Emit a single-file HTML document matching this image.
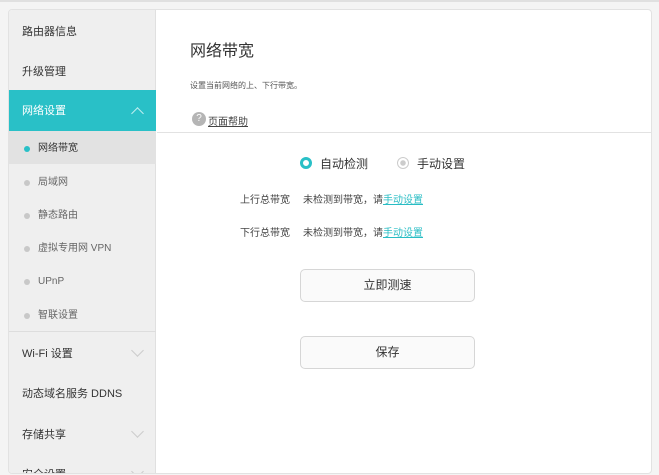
<!DOCTYPE html>
<html><head><meta charset="utf-8"><style>
*{margin:0;padding:0;box-sizing:border-box}
html,body{width:659px;height:475px;overflow:hidden}
body{background:#f4f4f4;font-family:"Liberation Sans","Noto Sans CJK SC",sans-serif;position:relative;color:#333}
.top{position:absolute;left:0;top:0;width:659px;height:2px;background:#e0e0e0}
.card{position:absolute;left:8px;top:9px;width:644px;height:465px;background:#fff;border:1px solid #e2e2e2;border-radius:4px;overflow:hidden}
.side{position:absolute;left:0;top:0;width:147px;height:480px;background:#efefef;border-right:1px solid #e0e0e0}
.it{position:absolute;left:13px;font-size:11px;color:#333;line-height:14px}
.act{position:absolute;left:0;top:80px;width:147px;height:41px;background:#29c0c7}
.sel{position:absolute;left:0;top:121px;width:147px;height:33px;background:#e2e2e2}
.sub{position:absolute;left:29px;font-size:10px;color:#666;line-height:12px}
.dot{position:absolute;left:15px;width:6px;height:6px;border-radius:50%;background:#c8c8c8}
.chev{position:absolute;left:124px;width:9px;height:9px;border-right:1px solid #ccc;border-bottom:1px solid #ccc;transform:rotate(45deg)}
.sep{position:absolute;left:0;top:321px;width:147px;height:1px;background:#ddd}
.main{position:absolute;left:148px;top:0;right:0}
.t{position:absolute;font-size:12px}
.btn{position:absolute;left:143px;width:175px;height:33px;border:1px solid #d6d6d6;border-radius:5px;background:#fafafa;font-size:12px;text-align:center;line-height:31px;color:#333}
a{color:#29bdc4;text-decoration:underline}
</style></head><body>
<div class="top"></div>
<div class="card">
 <div class="side">
  <div class="it" style="top:15px">路由器信息</div>
  <div class="it" style="top:55px">升级管理</div>
  <div class="act"></div>
  <div class="it" style="top:94px;color:#fff">网络设置</div>
  <div class="chev" style="top:99px;border-color:#bfeef0;transform:rotate(225deg)"></div>
  <div class="sel"></div>
  <div class="dot" style="top:136px;background:#29c0c7"></div><div class="sub" style="top:133px;color:#333">网络带宽</div>
  <div class="dot" style="top:170px"></div><div class="sub" style="top:167px">局域网</div>
  <div class="dot" style="top:203px"></div><div class="sub" style="top:200px">静态路由</div>
  <div class="dot" style="top:236px"></div><div class="sub" style="top:233px">虚拟专用网 VPN</div>
  <div class="dot" style="top:269px"></div><div class="sub" style="top:266px">UPnP</div>
  <div class="dot" style="top:303px"></div><div class="sub" style="top:300px">智联设置</div>
  <div class="sep"></div>
  <div class="it" style="top:337px">Wi-Fi 设置</div><div class="chev" style="top:336px"></div>
  <div class="it" style="top:377px">动态域名服务 DDNS</div>
  <div class="it" style="top:418px">存储共享</div><div class="chev" style="top:417px"></div>
  <div class="it" style="top:458px">安全设置</div><div class="chev" style="top:457px"></div>
 </div>
 <div class="main">
  <div class="t" style="left:33px;top:27px;font-size:16px;color:#333">网络带宽</div>
  <div class="t" style="left:33px;top:70px;font-size:8px;color:#555">设置当前网络的上、下行带宽。</div>
  <div style="position:absolute;left:35px;top:102px;width:14px;height:14px;border-radius:50%;background:#b5b5b5;color:#fff;font-size:10px;text-align:center;line-height:14px">?</div>
  <div class="t" style="left:51px;top:103px;font-size:10px;text-decoration:underline;color:#444">页面帮助</div>
  <div style="position:absolute;left:0;top:122px;width:500px;height:1px;background:#e2e2e2"></div>
  <div style="position:absolute;left:143px;top:147px;width:12px;height:12px;border-radius:50%;border:3.5px solid #29c0c7"></div>
  <div class="t" style="left:163px;top:145px">自动检测</div>
  <div style="position:absolute;left:240px;top:147px;width:12px;height:12px;border-radius:50%;border:1px solid #ccc;background:radial-gradient(#ccc 0 2.5px,#fff 3px)"></div>
  <div class="t" style="left:260px;top:145px">手动设置</div>
  <div class="t" style="left:83px;top:181px;font-size:10px;color:#444">上行总带宽</div>
  <div class="t" style="left:146px;top:181px;font-size:10px;color:#444">未检测到带宽，请<a>手动设置</a></div>
  <div class="t" style="left:83px;top:214px;font-size:10px;color:#444">下行总带宽</div>
  <div class="t" style="left:146px;top:214px;font-size:10px;color:#444">未检测到带宽，请<a>手动设置</a></div>
  <div class="btn" style="top:259px">立即测速</div>
  <div class="btn" style="top:326px">保存</div>
 </div>
</div>
</body></html>
